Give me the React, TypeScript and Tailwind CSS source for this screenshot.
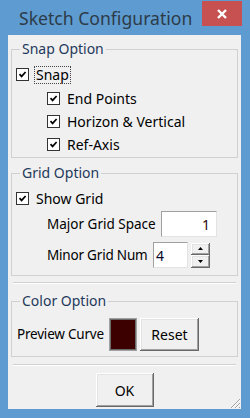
import React from "react";

const font = { fontFamily: '"Noto Sans", "Open Sans", sans-serif' };

function Check() {
  return (
    <div className="w-[13px] h-[13px] border border-[#333333] bg-white flex items-center justify-center shrink-0">
      <svg width="9" height="9" viewBox="0 0 9 9">
        <path d="M1.5 4.2 L3.6 6.4 L7.6 2" fill="none" stroke="#000" strokeWidth="1.7" />
      </svg>
    </div>
  );
}

function CheckRow({ label, indent, focus }: { label: string; indent: string; focus?: boolean }) {
  return (
    <div className={`h-[23px] flex items-center ${indent}`}>
      <Check />
      <span
        className={`ml-[6px] text-[14px] leading-[16px] text-black px-[1px] whitespace-nowrap ${
          focus ? "outline outline-1 outline-dotted outline-[#444]" : ""
        }`}
      >
        {label}
      </span>
    </div>
  );
}

function Legend({ children }: { children: React.ReactNode }) {
  return (
    <legend className="ml-[8px] px-[2px] text-[14px] leading-[20px] text-[#1e395b] whitespace-nowrap">{children}</legend>
  );
}

const raised =
  "bg-[#f0f0f0] shadow-[inset_-1px_-1px_0_#696969,inset_1px_1px_0_#ffffff,inset_-2px_-2px_0_#a0a0a0,inset_2px_2px_0_#e3e3e3]";

function Separator({ mt }: { mt: string }) {
  return (
    <div className={`${mt} mx-[2px] h-[2px] border-t border-[#d0d0d0] border-b border-b-white`} />
  );
}

export default function App() {
  return (
    <div className="w-[250px] h-[418px] bg-[#5e9bd1] flex flex-col" style={font}>
      <div className="h-[35px] flex items-start">
        <div className="pl-[19px] pt-[6px] text-[17.6px] leading-[24px] text-[#2d3b48] whitespace-nowrap">Sketch Configuration</div>
        <div className="ml-auto mr-[8px] mt-[1px] w-[40px] h-[25px] bg-[#c75050] flex items-center justify-center shrink-0">
          <svg width="12" height="12" viewBox="0 0 12 12">
            <path d="M2 2 L10 10 M10 2 L2 10" stroke="#fff" strokeWidth="2.4" />
          </svg>
        </div>
      </div>
      <div className="mx-[8px] w-[233px] h-[374px] bg-[#f0f0f0] flex flex-col px-[3px] relative">
        {/* Snap Option */}
        <fieldset className="mt-[4px] border border-[#d0d0d0] pb-[1px]">
          <Legend>Snap Option</Legend>
          <div className="pt-[4px] flex flex-col">
            <div className="mb-[1px]">
              <CheckRow label="Snap" indent="ml-[4px]" focus />
            </div>
            <CheckRow label="End Points" indent="ml-[35px]" />
            <CheckRow label="Horizon & Vertical" indent="ml-[35px]" />
            <CheckRow label="Ref-Axis" indent="ml-[35px]" />
          </div>
        </fieldset>

        {/* Grid Option */}
        <fieldset className="mt-[5px] border border-[#d0d0d0] pb-[7px]">
          <Legend>Grid Option</Legend>
          <div className="pt-[4px] flex flex-col">
            <CheckRow label="Show Grid" indent="ml-[4px]" />
            <div className="mt-[1px] h-[26px] flex items-center">
              <span className="ml-[35px] w-[114px] shrink-0 text-[13.5px] text-black whitespace-nowrap">Major Grid Space</span>
              <div className="w-[56px] h-[26px] shrink-0 bg-white border border-t-[#a0a0a0] border-l-[#a0a0a0] border-r-[#e3e3e3] border-b-[#e3e3e3] flex items-center justify-end pr-[6px] text-[14px] text-[#2a0a0a]">
                1
              </div>
            </div>
            <div className="mt-[5px] h-[26px] flex items-center">
              <span className="ml-[35px] w-[106px] shrink-0 text-[13.5px] tracking-[-0.2px] text-black whitespace-nowrap">Minor Grid Num</span>
              <div className="w-[35px] h-[26px] shrink-0 bg-white border border-t-[#a0a0a0] border-l-[#a0a0a0] border-r-[#e3e3e3] border-b-[#e3e3e3] flex items-center pl-[2px] text-[14px] text-[#0a0a2a]">
                4
              </div>
              <div className="ml-[3px] w-[19px] h-[25px] shrink-0 flex flex-col">
                <div className={`h-[12px] flex items-center justify-center ${raised}`}>
                  <svg width="5" height="3" viewBox="0 0 5 3">
                    <path d="M0 3 L2.5 0 L5 3 Z" fill="#000" />
                  </svg>
                </div>
                <div className={`h-[13px] flex items-center justify-center ${raised}`}>
                  <svg width="5" height="3" viewBox="0 0 5 3">
                    <path d="M0 0 L2.5 3 L5 0 Z" fill="#000" />
                  </svg>
                </div>
              </div>
            </div>
          </div>
        </fieldset>

        <Separator mt="mt-[6px]" />

        {/* Color Option */}
        <fieldset className="mt-[7px] border border-[#d0d0d0] pb-[5px]">
          <Legend>Color Option</Legend>
          <div className="pt-[7px] h-[40px] flex items-start">
            <div className="h-[33px] flex items-center ml-[5px] w-[92px] shrink-0 text-[13.5px] tracking-[-0.2px] text-black whitespace-nowrap">Preview Curve</div>
            <div className="w-[28px] h-[33px] shrink-0 border border-[#a0a0a0] bg-[#6a6a6a] p-[1px]">
              <div className="w-full h-full bg-[#3d0000]" />
            </div>
            <div className={`ml-[3px] w-[59px] h-[33px] shrink-0 flex items-center justify-center text-[14px] text-black ${raised}`}>
              Reset
            </div>
          </div>
        </fieldset>

        <Separator mt="mt-[7px]" />

        <div className="mt-[7px] flex justify-center">
          <div className={`w-[58px] h-[34px] flex items-center justify-center text-[14px] text-black ${raised}`}>
            OK
          </div>
        </div>

        <svg className="absolute right-0 bottom-0" width="13" height="13" viewBox="0 0 13 13">
          <path d="M12 3 L3 12 M12 7 L7 12 M12 11 L11 12" stroke="#a0a0a0" strokeWidth="1" />
          <path d="M12 4 L4 12 M12 8 L8 12" stroke="#ffffff" strokeWidth="1" />
        </svg>
      </div>
    </div>
  );
}
